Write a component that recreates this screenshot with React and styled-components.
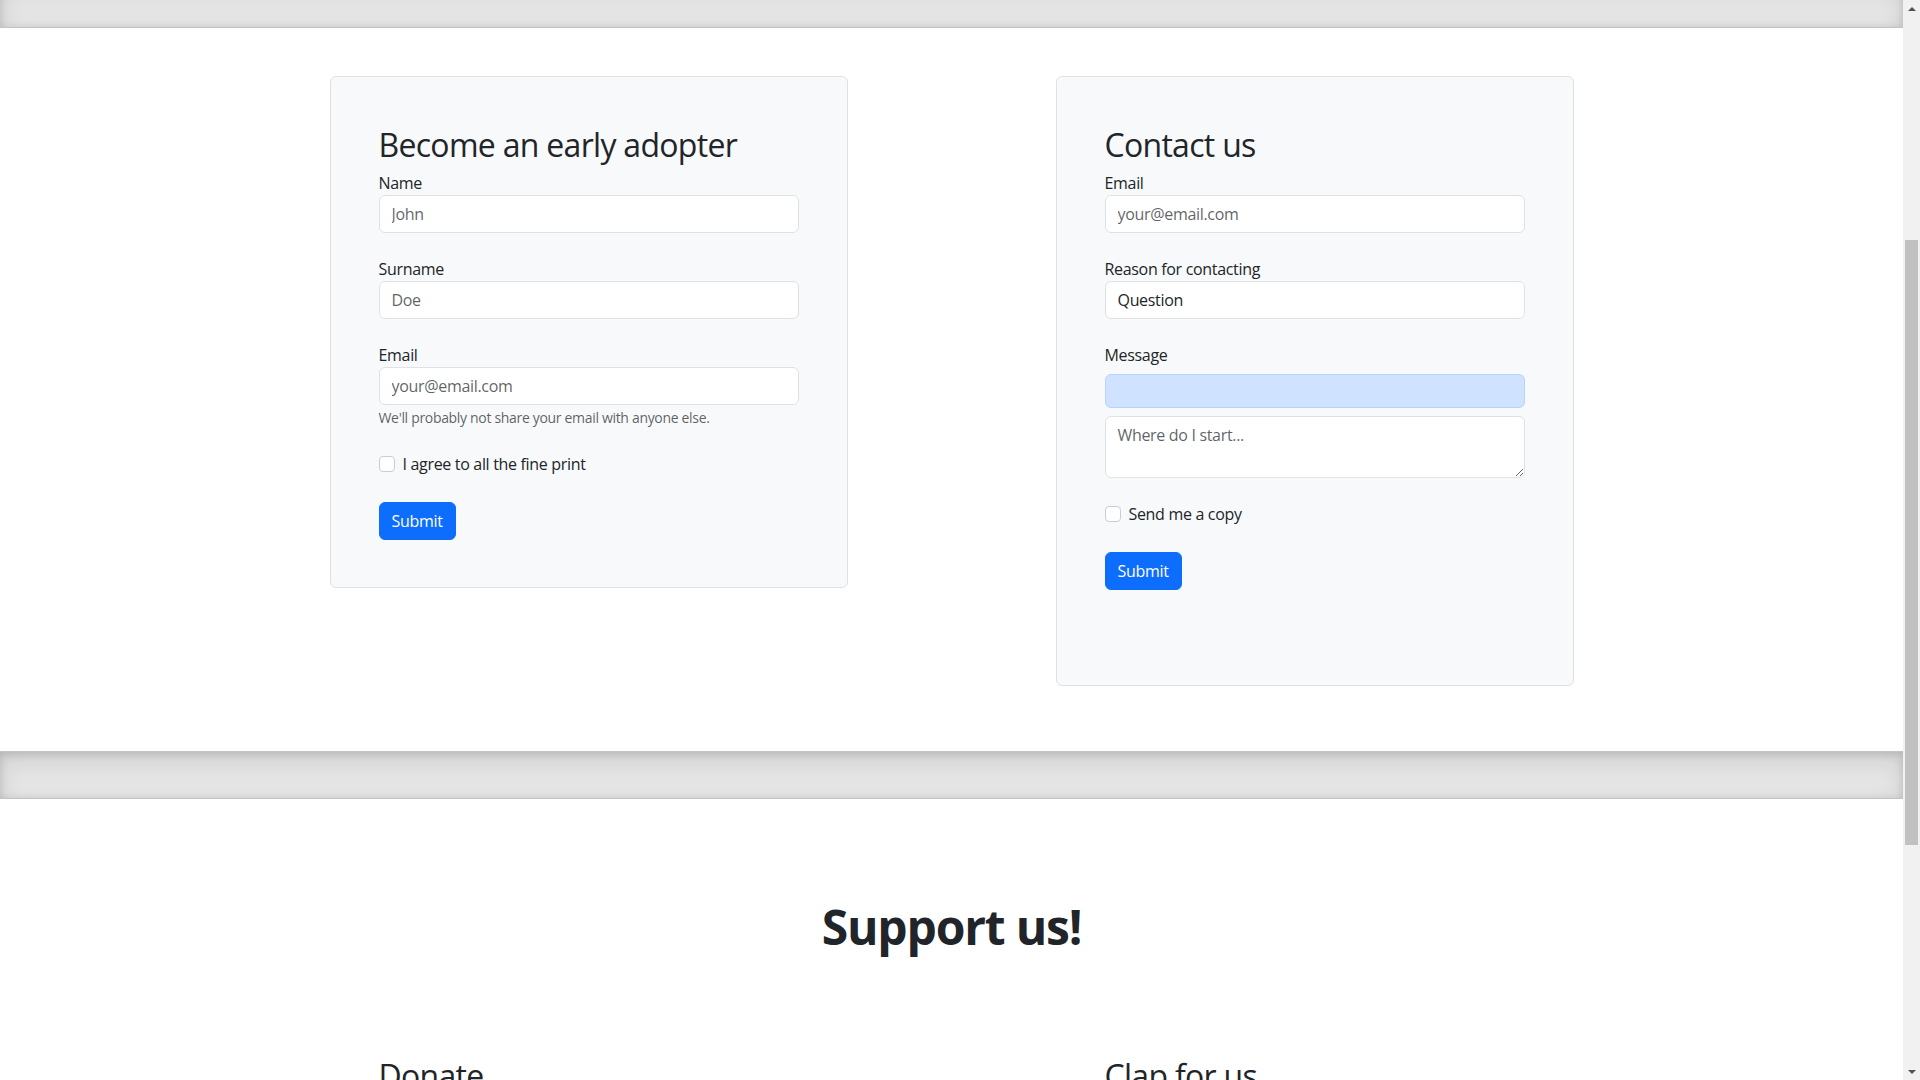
import React from "react";
import styled, { createGlobalStyle } from "styled-components";

const GlobalStyle = createGlobalStyle`
  *, *::before, *::after { box-sizing: border-box; }
  html, body { margin: 0; padding: 0; height: 100%; overflow: hidden; }
  body {
    font-family: "Open Sans", "Noto Sans", "Liberation Sans", Arial, sans-serif;
    font-size: 16px;
    line-height: 1.5;
    letter-spacing: -0.02em;
    color: #212529;
    background: #ffffff;
  }
  #root { height: 100%; }
`;

const Viewport = styled.div`
  display: flex;
  height: 100vh;
  overflow: hidden;
`;

const Page = styled.main`
  flex: 1;
  min-width: 0;
  overflow: hidden;
`;

const ScrolledContent = styled.div`
  margin-top: -20px;
`;

const Divider = styled.div`
  width: 100%;
  height: 48px;
  background-color: rgba(0, 0, 0, 0.1);
  border: solid rgba(0, 0, 0, 0.15);
  border-width: 1px 0;
  box-shadow: inset 0 0.5em 1.5em rgba(0, 0, 0, 0.1),
    inset 0 0.125em 0.5em rgba(0, 0, 0, 0.15);
`;

const FormsSection = styled.section`
  padding: 48px 0 65px;
`;

const Columns = styled.div`
  display: grid;
  grid-template-columns: 518px 518px;
  column-gap: 208px;
  justify-content: center;
  align-items: start;
`;

const Card = styled.form`
  background: #f8f9fa;
  border: 1px solid #dee2e6;
  border-radius: 6px;
  padding: 48px 48px ${(p) => p.$bottom}px;
`;

const CardTitle = styled.h2`
  margin: 1px 0 7px;
  font-size: 32px;
  font-weight: 500;
  line-height: 1.2;
  letter-spacing: -0.022em;
  color: #212529;
`;

const Field = styled.div`
  margin-bottom: 24px;
`;

const Label = styled.label`
  display: block;
  margin-bottom: ${(p) => p.$gap || 0}px;
  font-size: 16px;
  line-height: 24px;
`;

const TextInput = styled.input`
  display: block;
  width: 100%;
  height: 38px;
  padding: 6px 12px;
  font: inherit;
  font-size: 16px;
  line-height: 1.5;
  letter-spacing: -0.02em;
  color: #212529;
  background: #ffffff;
  border: 1px solid #dee2e6;
  border-radius: 6px;
  outline: none;
  &::placeholder { color: rgba(33, 37, 41, 0.72); }
`;

const TextArea = styled.textarea`
  display: block;
  width: 100%;
  height: 62px;
  padding: 6px 12px;
  font: inherit;
  font-size: 16px;
  line-height: 1.5;
  letter-spacing: -0.02em;
  color: #212529;
  background: #ffffff;
  border: 1px solid #dee2e6;
  border-radius: 6px;
  resize: vertical;
  outline: none;
  &::placeholder { color: rgba(33, 37, 41, 0.72); }
`;

const Help = styled.small`
  display: block;
  margin-top: 2px;
  font-size: 14px;
  line-height: 21px;
  color: rgba(33, 37, 41, 0.72);
`;

const Notice = styled.div`
  height: 34px;
  margin-bottom: 8px;
  background: #cfe2ff;
  border: 1px solid #b6d4fe;
  border-radius: 6px;
`;

const CheckRow = styled.label`
  display: flex;
  align-items: flex-start;
  gap: 8px;
  min-height: 24px;
  margin-bottom: 26px;
  font-size: 16px;
  line-height: 24px;
`;

const CheckBox = styled.input.attrs({ type: "checkbox" })`
  appearance: none;
  flex: none;
  width: 16px;
  height: 16px;
  margin: 4px 0 0;
  background: #ffffff;
  border: 1px solid #c9cdd1;
  border-radius: 4px;
`;

const Button = styled.button`
  display: inline-block;
  padding: 6px 12px;
  font: inherit;
  font-size: 16px;
  line-height: 1.5;
  letter-spacing: -0.02em;
  color: #ffffff;
  background: #0d6efd;
  border: 1px solid #0d6efd;
  border-radius: 6px;
  cursor: pointer;
`;

const SupportSection = styled.section`
  margin-top: 48px;
  padding-top: 51px;
`;

const Display = styled.h1`
  margin: 0 0 100px;
  font-size: 48px;
  font-weight: 700;
  line-height: 1.2;
  letter-spacing: -0.025em;
  text-align: center;
  color: #212529;
`;

const SupportColumn = styled.div`
  padding: 0 49px;
`;

const Scrollbar = styled.div`
  flex: none;
  width: 17px;
  display: flex;
  flex-direction: column;
  background: #f1f1f1;
`;

const ScrollArrow = styled.div`
  flex: none;
  height: 17px;
  display: flex;
  align-items: center;
  justify-content: center;
`;

const Track = styled.div`
  flex: 1;
  display: flex;
  flex-direction: column;
  padding: 223px 2px 218px;
`;

const Thumb = styled.div`
  flex: 1;
  background: #c1c1c1;
`;

const Arrow = ({ down }) => (
  <svg width="8" height="4" viewBox="0 0 8 4">
    <path d={down ? "M0 0 L8 0 L4 4 Z" : "M4 0 L8 4 L0 4 Z"} fill="#505050" />
  </svg>
);

export default function App() {
  const stop = (e) => e.preventDefault();
  return (
    <>
      <GlobalStyle />
      <Viewport>
        <Page>
          <ScrolledContent>
            <Divider />
            <FormsSection>
              <Columns>
                <Card $bottom={47} onSubmit={stop}>
                  <CardTitle>Become an early adopter</CardTitle>
                  <Field>
                    <Label htmlFor="name">Name</Label>
                    <TextInput id="name" placeholder="John" />
                  </Field>
                  <Field>
                    <Label htmlFor="surname">Surname</Label>
                    <TextInput id="surname" placeholder="Doe" />
                  </Field>
                  <Field>
                    <Label htmlFor="email1">Email</Label>
                    <TextInput id="email1" type="email" placeholder="your@email.com" />
                    <Help>We'll probably not share your email with anyone else.</Help>
                  </Field>
                  <CheckRow>
                    <CheckBox />
                    <span>I agree to all the fine print</span>
                  </CheckRow>
                  <Button type="submit">Submit</Button>
                </Card>

                <Card $bottom={95} onSubmit={stop}>
                  <CardTitle>Contact us</CardTitle>
                  <Field>
                    <Label htmlFor="email2">Email</Label>
                    <TextInput id="email2" type="email" placeholder="your@email.com" />
                  </Field>
                  <Field>
                    <Label htmlFor="reason">Reason for contacting</Label>
                    <TextInput id="reason" defaultValue="Question" />
                  </Field>
                  <Field>
                    <Label htmlFor="message" $gap={7}>Message</Label>
                    <Notice />
                    <TextArea id="message" rows={2} placeholder="Where do I start..." />
                  </Field>
                  <CheckRow>
                    <CheckBox />
                    <span>Send me a copy</span>
                  </CheckRow>
                  <Button type="submit">Submit</Button>
                </Card>
              </Columns>
            </FormsSection>
            <Divider />
            <SupportSection>
              <Display>Support us!</Display>
              <Columns>
                <SupportColumn>
                  <CardTitle>Donate</CardTitle>
                </SupportColumn>
                <SupportColumn>
                  <CardTitle>Clap for us</CardTitle>
                </SupportColumn>
              </Columns>
            </SupportSection>
          </ScrolledContent>
        </Page>
        <Scrollbar>
          <ScrollArrow><Arrow /></ScrollArrow>
          <Track><Thumb /></Track>
          <ScrollArrow><Arrow down /></ScrollArrow>
        </Scrollbar>
      </Viewport>
    </>
  );
}
